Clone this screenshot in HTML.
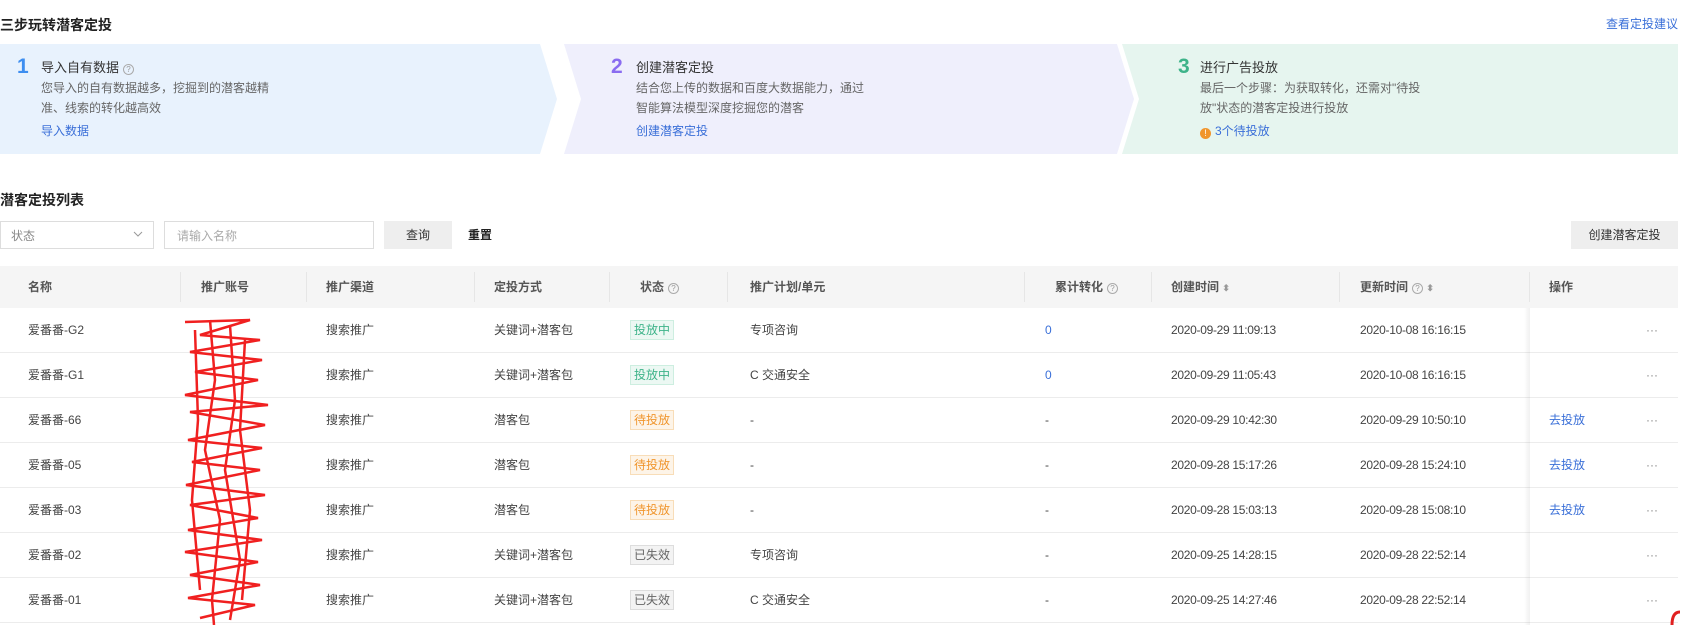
<!DOCTYPE html>
<html><head><meta charset="utf-8"><style>
*{margin:0;padding:0;box-sizing:border-box}
body{width:1683px;height:625px;overflow:hidden;background:#fff;font-family:"Liberation Sans","Noto Sans CJK SC",sans-serif;font-size:13px;color:#333;position:relative}
.a{position:absolute;white-space:nowrap}
.link{color:#3a6fd8}
.panel{position:absolute;top:44px;height:110px}
.num{position:absolute;font-size:21px;font-weight:bold;top:11px}
.pt{position:absolute;font-size:13px;color:#333;top:16px;line-height:16px}
.pd{position:absolute;font-size:12px;color:#666;line-height:20px;top:34px}
.pl{position:absolute;font-size:12px;top:79px;line-height:16px}
.th{position:absolute;top:266px;height:42px;left:0;width:1678px;background:#f5f5f5}
.th span{position:absolute;top:13px;color:#555;font-weight:bold;font-size:12px;line-height:16px}
.sep{position:absolute;top:6px;width:1px;height:30px;background:#e6e6e6}
.row{position:absolute;left:0;width:1678px;height:45px;border-bottom:1px solid #ececec}
.row span{position:absolute;top:14px;color:#444;font-size:12px;line-height:16px}
.d{letter-spacing:-0.3px}
.tag{position:absolute;top:12px;height:20px;padding:0 3px;font-size:12px;line-height:18px;border:1px solid}
.g{color:#3db389;background:#ecf8f3;border-color:#cdeee0}
.o{color:#f0952c;background:#fdf4e8;border-color:#f8ddb8}
.x{color:#666;background:#f3f3f3;border-color:#ddd}
.q{display:inline-block;width:11px;height:11px;border:1px solid #aaa;border-radius:50%;font-size:8px;line-height:9px;text-align:center;color:#999;font-weight:normal;vertical-align:0px;margin-left:4px;font-style:normal}
</style></head><body>
<div class="a" style="left:0;top:15px;font-size:14px;font-weight:bold;color:#222">三步玩转潜客定投</div>
<div class="a link" style="right:5px;top:15px;font-size:12px">查看定投建议</div>

<svg class="a" style="left:0;top:44px" width="1683" height="110">
<polygon points="0,0 540,0 557,55 540,110 0,110" fill="#e8f2fd"/>
<polygon points="564,0 1117,0 1134,55 1117,110 564,110 581,55" fill="#efeffc"/>
<polygon points="1122,0 1678,0 1678,110 1122,110 1139,55" fill="#e6f5ef"/>
</svg>
<div class="panel" style="left:0;width:550px">
<div class="num" style="left:17px;color:#3d8ef0">1</div>
<div class="pt" style="left:41px">导入自有数据<span class="q">?</span></div>
<div class="pd" style="left:41px">您导入的自有数据越多，挖掘到的潜客越精<br>准、线索的转化越高效</div>
<div class="pl link" style="left:41px">导入数据</div>
</div>
<div class="panel" style="left:0;width:1130px">
<div class="num" style="left:611px;color:#8a6cf0">2</div>
<div class="pt" style="left:636px">创建潜客定投</div>
<div class="pd" style="left:636px">结合您上传的数据和百度大数据能力，通过<br>智能算法模型深度挖掘您的潜客</div>
<div class="pl link" style="left:636px">创建潜客定投</div>
</div>
<div class="panel" style="left:0;width:1683px">
<div class="num" style="left:1178px;color:#3db389">3</div>
<div class="pt" style="left:1200px">进行广告投放</div>
<div class="pd" style="left:1200px">最后一个步骤：为获取转化，还需对"待投<br>放"状态的潜客定投进行投放</div>
<div class="pl link" style="left:1200px"><span style="display:inline-block;width:11px;height:11px;border-radius:50%;background:#f0952c;color:#fff;font-size:9px;line-height:11px;text-align:center;vertical-align:-1px;margin-right:4px">!</span>3个待投放</div>
</div>

<div class="a" style="left:0;top:190px;font-size:14px;font-weight:bold;color:#222">潜客定投列表</div>
<div class="a" style="left:0;top:221px;width:154px;height:28px;border:1px solid #ddd;color:#888;padding:6px 10px;font-size:12px;line-height:16px">状态<svg style="position:absolute;right:10px;top:9px" width="10" height="7"><path d="M1 1L5 5L9 1" stroke="#999" fill="none"/></svg></div>
<div class="a" style="left:164px;top:221px;width:210px;height:28px;border:1px solid #ddd;color:#aaa;padding:6px 12px;font-size:12px;line-height:16px">请输入名称</div>
<div class="a" style="left:384px;top:221px;width:68px;height:28px;background:#eee;color:#333;text-align:center;line-height:28px;font-size:12px">查询</div>
<div class="a" style="left:468px;top:227px;color:#222;font-weight:bold;font-size:12px;line-height:16px">重置</div>
<div class="a" style="left:1571px;top:221px;width:107px;height:28px;background:#eee;color:#333;text-align:center;line-height:28px;font-size:12px">创建潜客定投</div>

<div class="th">
<span style="left:28px">名称</span><div class="sep" style="left:180px"></div>
<span style="left:201px">推广账号</span><div class="sep" style="left:306px"></div>
<span style="left:326px">推广渠道</span><div class="sep" style="left:474px"></div>
<span style="left:494px">定投方式</span><div class="sep" style="left:609px"></div>
<span style="left:640px">状态<i class="q">?</i></span><div class="sep" style="left:727px"></div>
<span style="left:750px">推广计划/单元</span><div class="sep" style="left:1024px"></div>
<span style="left:1055px">累计转化<i class="q">?</i></span><div class="sep" style="left:1151px"></div>
<span style="left:1171px">创建时间 <b style="font-size:9px;color:#999">⬍</b></span><div class="sep" style="left:1339px"></div>
<span style="left:1360px">更新时间<i class="q">?</i> <b style="font-size:9px;color:#999">⬍</b></span><div class="sep" style="left:1529px"></div>
<span style="left:1549px">操作</span>
</div>

<div class="row" style="top:308px"><span style="left:28px">爱番番-G2</span><span style="left:326px">搜索推广</span><span style="left:494px">关键词+潜客包</span><i class="tag g" style="left:630px;font-style:normal">投放中</i><span style="left:750px">专项咨询</span><span style="left:1045px;color:#3a6fd8">0</span><span class="d" style="left:1171px">2020-09-29 11:09:13</span><span class="d" style="left:1360px">2020-10-08 16:16:15</span><span style="left:1646px;color:#888">···</span></div>
<div class="row" style="top:353px"><span style="left:28px">爱番番-G1</span><span style="left:326px">搜索推广</span><span style="left:494px">关键词+潜客包</span><i class="tag g" style="left:630px;font-style:normal">投放中</i><span style="left:750px">C 交通安全</span><span style="left:1045px;color:#3a6fd8">0</span><span class="d" style="left:1171px">2020-09-29 11:05:43</span><span class="d" style="left:1360px">2020-10-08 16:16:15</span><span style="left:1646px;color:#888">···</span></div>
<div class="row" style="top:398px"><span style="left:28px">爱番番-66</span><span style="left:326px">搜索推广</span><span style="left:494px">潜客包</span><i class="tag o" style="left:630px;font-style:normal">待投放</i><span style="left:750px">-</span><span style="left:1045px">-</span><span class="d" style="left:1171px">2020-09-29 10:42:30</span><span class="d" style="left:1360px">2020-09-29 10:50:10</span><span style="left:1549px;color:#3a6fd8">去投放</span><span style="left:1646px;color:#888">···</span></div>
<div class="row" style="top:443px"><span style="left:28px">爱番番-05</span><span style="left:326px">搜索推广</span><span style="left:494px">潜客包</span><i class="tag o" style="left:630px;font-style:normal">待投放</i><span style="left:750px">-</span><span style="left:1045px">-</span><span class="d" style="left:1171px">2020-09-28 15:17:26</span><span class="d" style="left:1360px">2020-09-28 15:24:10</span><span style="left:1549px;color:#3a6fd8">去投放</span><span style="left:1646px;color:#888">···</span></div>
<div class="row" style="top:488px"><span style="left:28px">爱番番-03</span><span style="left:326px">搜索推广</span><span style="left:494px">潜客包</span><i class="tag o" style="left:630px;font-style:normal">待投放</i><span style="left:750px">-</span><span style="left:1045px">-</span><span class="d" style="left:1171px">2020-09-28 15:03:13</span><span class="d" style="left:1360px">2020-09-28 15:08:10</span><span style="left:1549px;color:#3a6fd8">去投放</span><span style="left:1646px;color:#888">···</span></div>
<div class="row" style="top:533px"><span style="left:28px">爱番番-02</span><span style="left:326px">搜索推广</span><span style="left:494px">关键词+潜客包</span><i class="tag x" style="left:630px;font-style:normal">已失效</i><span style="left:750px">专项咨询</span><span style="left:1045px">-</span><span class="d" style="left:1171px">2020-09-25 14:28:15</span><span class="d" style="left:1360px">2020-09-28 22:52:14</span><span style="left:1646px;color:#888">···</span></div>
<div class="row" style="top:578px"><span style="left:28px">爱番番-01</span><span style="left:326px">搜索推广</span><span style="left:494px">关键词+潜客包</span><i class="tag x" style="left:630px;font-style:normal">已失效</i><span style="left:750px">C 交通安全</span><span style="left:1045px">-</span><span class="d" style="left:1171px">2020-09-25 14:27:46</span><span class="d" style="left:1360px">2020-09-28 22:52:14</span><span style="left:1646px;color:#888">···</span></div>

<div class="a" style="left:1524px;top:308px;width:6px;height:317px;background:linear-gradient(to right,rgba(0,0,0,0),rgba(0,0,0,0.06))"></div>

<svg class="a" style="left:0;top:0" width="1683" height="625">
<g stroke="#f02020" stroke-width="2.5" fill="none">
<path d="M185 322 L250 320 L200 335 L260 340 L190 352 L262 360 L195 372 L258 380 L185 395 L268 405 L190 412 L265 425 L188 440 L262 448 L192 462 L260 470 L186 485 L265 495 L190 505 L258 518 L188 530 L262 540 L185 552 L258 562 L190 575 L260 585 L188 598 L255 605 L200 618"/>
<path d="M210 320 L215 380 L205 450 L220 520 L212 600 L214 625"/>
<path d="M230 325 L235 400 L225 470 L240 560 L230 620"/>
<path d="M195 330 L198 420 L192 500 L200 590"/>
<path d="M245 340 L240 430 L250 510 L242 600"/>
</g>
<path d="M1672 625 Q1672 612 1680 612" stroke="#e02020" stroke-width="3" fill="none"/>
</svg>
</body></html>
